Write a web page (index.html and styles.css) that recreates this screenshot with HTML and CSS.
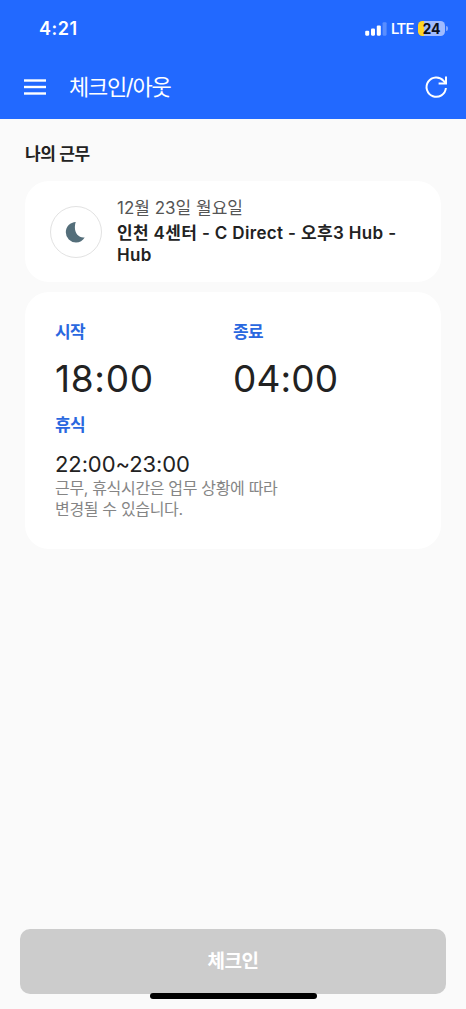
FILE: index.html
```html
<!DOCTYPE html>
<html lang="ko">
<head>
<meta charset="utf-8">
<meta name="viewport" content="width=device-width, initial-scale=1">
<title>체크인/아웃</title>
<link rel="stylesheet" href="styles.css">
</head>
<body>
<div class="app">
  <header class="header">
    <div class="status">
      <span class="clock">4:21</span>
      <div class="indicators">
        <svg class="signal" width="22" height="15" viewBox="0 0 22 15" fill="#fff">
          <rect x="0.2" y="9.7" width="4" height="5" rx="1.1"/>
          <rect x="6" y="7.4" width="4" height="7.3" rx="1.1"/>
          <rect x="11.8" y="4.4" width="4" height="10.3" rx="1.1"/>
          <rect x="17.6" y="1.2" width="4" height="13.5" rx="1.1" opacity=".25"/>
        </svg>
        <span class="network">LTE</span>
        <div class="battery"><span class="battery-level">24</span></div>
        <i class="battery-tip"></i>
      </div>
    </div>
    <nav class="nav">
      <svg class="menu" width="24" height="18" viewBox="0 0 24 18" fill="#fff">
        <rect x="1" y="1.3" width="22" height="2.4"/>
        <rect x="1" y="7.8" width="22" height="2.4"/>
        <rect x="1" y="14.3" width="22" height="2.4"/>
      </svg>
      <h1 class="title">체크인/아웃</h1>
      <svg class="refresh" width="24" height="24" viewBox="0 0 24 24" fill="none" stroke="#fff" stroke-width="2">
        <path d="M21.9 13A9.7 9.7 0 1 1 19.6 5.8L21.4 8"/>
        <path d="M22 1.6V8.500H14.600"/>
      </svg>
    </nav>
  </header>

  <main class="content">
    <h2 class="section-title">나의 근무</h2>
    <section class="card shift">
      <div class="shift-icon">
        <svg width="22" height="22" viewBox="0 0 22 22" fill="#546e7a">
          <path d="M10.800 1C5.300 1.200.8 5.700.8 11.200A10.200 10.200 0 0 0 11 21.400C14.700 21.400 17.900 19.400 19.700 16.400C14.500 17.400 9.900 12.700 9.900 6.800C9.900 4.600 10.100 2.600 10.800 1Z"/>
        </svg>
      </div>
      <div class="shift-text">
        <p class="date">12월 23일 월요일</p>
        <p class="place">인천 4센터 - C Direct - 오후3 Hub -<br>Hub</p>
      </div>
    </section>
    <section class="card hours">
      <div class="times">
        <div class="start"><h3 class="label">시작</h3><p class="time">18:00</p></div>
        <div class="end"><h3 class="label">종료</h3><p class="time time-end">04:00</p></div>
      </div>
      <h3 class="label">휴식</h3>
      <p class="rest">22:00~23:00</p>
      <p class="note">근무, 휴식시간은 업무 상황에 따라<br>변경될 수 있습니다.</p>
    </section>
  </main>

  <footer class="footer">
    <button class="checkin" disabled>체크인</button>
    <div class="home-indicator"></div>
  </footer>
</div>
</body>
</html>
```
FILE: styles.css
```css
* { box-sizing: border-box; margin: 0; padding: 0; }
body {
  background: #fafafa;
  color: #222;
  font-family: Inter, "Noto Sans CJK KR", sans-serif;
}
.app { height: 1009px; display: flex; flex-direction: column; overflow: hidden; }
.header { height: 119px; background: #2269ff; color: #fff; flex: none; }
.status {
  height: 57px; padding: 0 18px 0 39px;
  display: flex; align-items: center; justify-content: space-between;
}
.clock { font-size: 18px; font-weight: 600; letter-spacing: .5px; }
.indicators { display: flex; align-items: center; }
.network { margin-left: 4px; width: 27px; font: 500 15px/20px Roboto, sans-serif; letter-spacing: -.5px; padding-top: 1px; white-space: nowrap; }
.battery {
  width: 27px; height: 15px; border-radius: 4.5px;
  background: linear-gradient(90deg, #ffd426 6px, #a0bbff 6px);
  color: #0b1020; text-align: center;
}
.battery-level { display: block; font-size: 14px; font-weight: 700; line-height: 15px; }
.battery-tip { width: 2px; height: 5px; margin-left: 1px; background: #83a8ff; border-radius: 0 2px 2px 0; }
.nav { height: 60px; padding: 0 18px 0 23px; display: flex; align-items: center; }
.title { margin-left: 22px; font-size: 22px; font-weight: 400; letter-spacing: -1.3px; line-height: 30px; }
.refresh { margin-left: auto; }
.content { flex: 1; padding: 22px 25px 0; }
.section-title { font-size: 17px; font-weight: 600; letter-spacing: -.4px; line-height: 26px; }
.card { background: #fff; border-radius: 24px; }
.shift { height: 101px; margin-top: 14px; padding: 0 25px; display: flex; align-items: center; }
.shift-icon {
  width: 52px; height: 52px; flex: none; border: 1px solid #e2e2e2; border-radius: 50%;
  display: flex; align-items: center; justify-content: center;
}
.shift-text { margin-left: 15px; padding-bottom: 2px; white-space: nowrap; }
.date { color: #555; font-size: 17px; line-height: 25px; }
.place { margin-top: 1px; font-size: 17px; font-weight: 600; line-height: 22px; letter-spacing: .35px; }
.hours { height: 257px; margin-top: 10px; padding: 27px 30px 0; }
.times { display: grid; grid-template-columns: 178px 1fr; }
.label { color: #2a68df; font-size: 17px; font-weight: 700; line-height: 26px; letter-spacing: -.7px; }
.time { font-size: 37px; line-height: 44px; margin: 12px 0 11px; letter-spacing: .7px; }
.time-end { letter-spacing: .1px; }
.rest { margin-top: 12px; font-size: 22px; line-height: 28px; letter-spacing: -.1px; }
.note { color: #858585; font-size: 16px; line-height: 21px; letter-spacing: -.33px; white-space: nowrap; }
.footer { height: 80px; flex: none; display: flex; flex-direction: column; align-items: center; }
.checkin {
  width: 426px; height: 65px; flex: none; border: 0; border-radius: 10px;
  background: #ccc; color: #fff;
  font: 700 19px/62px Inter, "Noto Sans CJK KR", sans-serif; letter-spacing: -.4px;
}
.home-indicator { z-index: 1; width: 167px; height: 6px; margin-top: -1px; background: #000; border-radius: 3px; }
```
